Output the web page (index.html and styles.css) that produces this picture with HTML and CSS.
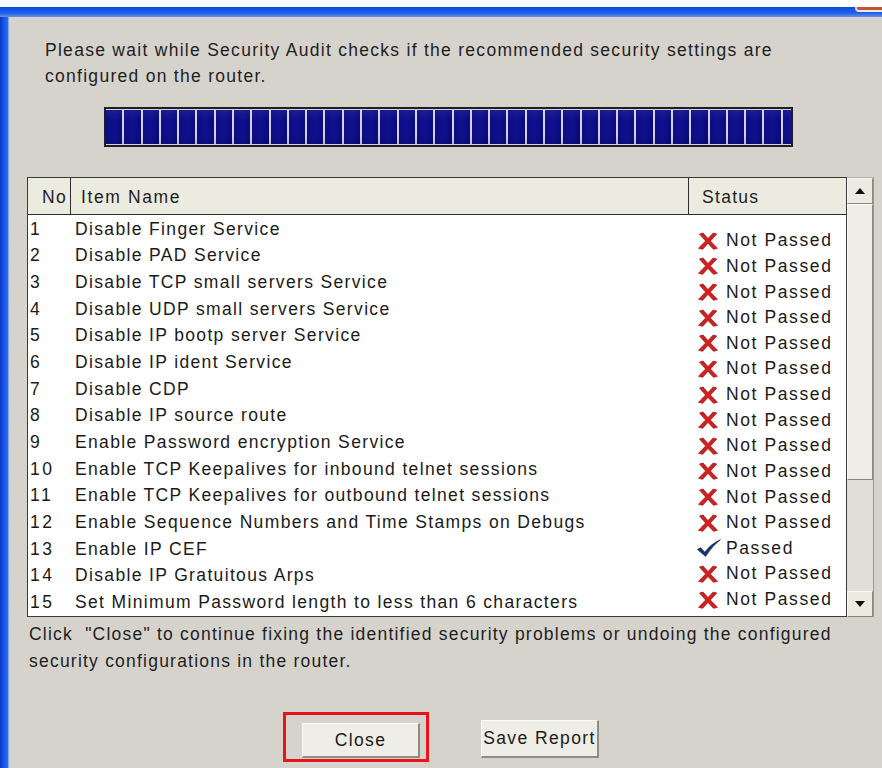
FILE: index.html
```html
<!DOCTYPE html>
<html lang="en">
<head>
<meta charset="utf-8">
<title>Security Audit</title>
<link rel="stylesheet" href="styles.css">
</head>
<body>
<svg class="defs" width="0" height="0" aria-hidden="true">
  <defs>
    <symbol id="icon-fail" viewBox="0 0 22 18">
      <path d="M2.5 2 L6 1 L11 6.6 L16.2 1 L19.8 2 L13.4 9 L20.5 16.3 L16.5 17.3 L11 11.4 L5.6 17.3 L1.5 16.3 L8.6 9 Z" fill="#d41f1f" stroke="#8e1414" stroke-width="0.7" stroke-linejoin="round"/>
    </symbol>
    <symbol id="icon-pass" viewBox="0 0 24 18">
      <path d="M0.5 10.5 L3.5 8.6 L7.8 13.2 Q13.5 5.2 23.5 0.6 Q15.2 7 8.6 17.4 Z" fill="#1b2f7a" stroke="#0e1a4e" stroke-width="0.6" stroke-linejoin="round"/>
    </symbol>
  </defs>
</svg>

<div class="window">
  <div class="titlebar"><span class="close-btn"></span></div>
  <div class="frame">
    <div class="edge"></div>
    <main class="content">
      <p class="intro">Please wait while Security Audit checks if the recommended security settings are<br>configured on the router.</p>

      <div class="progress"></div>

      <div class="listbox">
        <div class="table">
          <div class="thead">
            <div class="th th-no">No</div>
            <div class="th th-name">Item Name</div>
            <div class="th th-status">Status</div>
          </div>
          <div class="tbody">
            <ol class="items">
              <li><span class="no">1</span><span class="name">Disable Finger Service</span></li>
              <li><span class="no">2</span><span class="name">Disable PAD Service</span></li>
              <li><span class="no">3</span><span class="name">Disable TCP small servers Service</span></li>
              <li><span class="no">4</span><span class="name">Disable UDP small servers Service</span></li>
              <li><span class="no">5</span><span class="name">Disable IP bootp server Service</span></li>
              <li><span class="no">6</span><span class="name">Disable IP ident Service</span></li>
              <li><span class="no">7</span><span class="name">Disable CDP</span></li>
              <li><span class="no">8</span><span class="name">Disable IP source route</span></li>
              <li><span class="no">9</span><span class="name">Enable Password encryption Service</span></li>
              <li><span class="no">10</span><span class="name">Enable TCP Keepalives for inbound telnet sessions</span></li>
              <li><span class="no">11</span><span class="name">Enable TCP Keepalives for outbound telnet sessions</span></li>
              <li><span class="no">12</span><span class="name">Enable Sequence Numbers and Time Stamps on Debugs</span></li>
              <li><span class="no">13</span><span class="name">Enable IP CEF</span></li>
              <li><span class="no">14</span><span class="name">Disable IP Gratuitous Arps</span></li>
              <li><span class="no">15</span><span class="name">Set Minimum Password length to less than 6 characters</span></li>
            </ol>
            <ul class="status">
              <li><svg class="ico"><use href="#icon-fail"/></svg>Not Passed</li>
              <li><svg class="ico"><use href="#icon-fail"/></svg>Not Passed</li>
              <li><svg class="ico"><use href="#icon-fail"/></svg>Not Passed</li>
              <li><svg class="ico"><use href="#icon-fail"/></svg>Not Passed</li>
              <li><svg class="ico"><use href="#icon-fail"/></svg>Not Passed</li>
              <li><svg class="ico"><use href="#icon-fail"/></svg>Not Passed</li>
              <li><svg class="ico"><use href="#icon-fail"/></svg>Not Passed</li>
              <li><svg class="ico"><use href="#icon-fail"/></svg>Not Passed</li>
              <li><svg class="ico"><use href="#icon-fail"/></svg>Not Passed</li>
              <li><svg class="ico"><use href="#icon-fail"/></svg>Not Passed</li>
              <li><svg class="ico"><use href="#icon-fail"/></svg>Not Passed</li>
              <li><svg class="ico"><use href="#icon-fail"/></svg>Not Passed</li>
              <li><svg class="ico ico-pass"><use href="#icon-pass"/></svg>Passed</li>
              <li><svg class="ico"><use href="#icon-fail"/></svg>Not Passed</li>
              <li><svg class="ico"><use href="#icon-fail"/></svg>Not Passed</li>
            </ul>
          </div>
        </div>
        <div class="scrollbar">
          <div class="sb-btn"><span class="arrow-up"></span></div>
          <div class="sb-thumb"></div>
          <div class="sb-track"></div>
          <div class="sb-btn"><span class="arrow-down"></span></div>
        </div>
      </div>

      <p class="note">Click &nbsp;"Close" to continue fixing the identified security problems or undoing the configured<br>security configurations in the router.</p>

      <div class="actions">
        <div class="highlight"><button class="btn btn-close" type="button">Close</button></div>
        <button class="btn btn-save" type="button">Save Report</button>
      </div>
    </main>
  </div>
</div>
</body>
</html>
```

FILE: styles.css
```css
* { box-sizing: border-box; }

html, body {
  margin: 0;
  padding: 0;
  background: #ffffff;
  height: 768px;
  overflow: hidden;
}

.defs { position: absolute; width: 0; height: 0; }

.window {
  margin-top: 7px;
  height: 761px;
  display: flex;
  flex-direction: column;
  font-family: "Liberation Sans", Arial, sans-serif;
  font-size: 17.5px;
  letter-spacing: 1.3px;
  color: #1e1e1e;
}

/* bottom edge of the XP-style title bar */
.titlebar {
  position: relative;
  height: 10px;
  background: linear-gradient(180deg, #0a4be0 0%, #1d60ee 60%, #6f8fe0 100%);
  flex: none;
}

.close-btn {
  position: absolute;
  right: 0;
  top: 0;
  width: 27px;
  height: 5px;
  background: #b8563a;
  border-bottom: 2px solid #f2e4e0;
  border-left: 2px solid #e8d8d6;
  border-bottom-left-radius: 4px;
}

.frame {
  flex: 1;
  display: flex;
}

.edge {
  width: 10px;
  flex: none;
  background: linear-gradient(90deg, #0838c8 0%, #1656e8 40%, #2a6af0 75%, #b7c3e6 90%, #d8d6d8 100%);
}

.content {
  flex: 1;
  background: #d6d3cd;
  padding-top: 20px;
}

.intro {
  margin: 0 0 0 35px;
  line-height: 26px;
  letter-spacing: 1.28px;
}

/* segmented progress indicator */
.progress {
  margin: 18px 0 0 94px;
  width: 689px;
  height: 40px;
  border: 2px solid #1c1c2a;
  padding: 1px 0 1px 0;
  background-color: #eeeeff;
  background-image:
    linear-gradient(180deg, rgba(255,255,255,0.06) 0%, rgba(0,0,0,0) 30%, rgba(0,0,0,0) 70%, rgba(0,0,0,0.12) 100%),
    repeating-linear-gradient(90deg, #0c0c86 0px, #10108e 8px, #0a0a7e 16.3px, #d2d2f0 16.3px, #d2d2f0 18.29px);
  background-clip: content-box;
  background-origin: content-box;
}

/* list with scrollbar */
.listbox {
  margin: 30px 0 0 17px;
  width: 847px;
  height: 440px;
  display: flex;
}

.table {
  width: 820px;
  height: 440px;
  border: 1px solid #3a3a3a;
  background: #ffffff;
  display: flex;
  flex-direction: column;
}

.thead {
  height: 37px;
  display: flex;
  background: #ecebe0;
  border-bottom: 1px solid #2e2e2e;
  flex: none;
}

.th {
  display: flex;
  align-items: center;
  padding-top: 3px;
  white-space: nowrap;
}

.th-no {
  width: 43px;
  justify-content: flex-end;
  padding-right: 3px;
  border-right: 1px solid #2e2e2e;
}

.th-name {
  flex: 1;
  padding-left: 10px;
  letter-spacing: 1.6px;
  border-right: 1px solid #2e2e2e;
}

.th-status {
  width: 157px;
  padding-left: 13px;
}

.tbody {
  flex: 1;
  display: flex;
  overflow: hidden;
}

.items, .status {
  list-style: none;
  margin: 0;
  padding: 0;
}

.items {
  width: 661px;
  padding-top: 1px;
}

.items li {
  height: 26.65px;
  display: flex;
  align-items: center;
  white-space: nowrap;
  color: #1a1a1a;
}

.no {
  width: 43px;
  padding-left: 2px;
  letter-spacing: 2.6px;
}

.name {
  padding-left: 4px;
  letter-spacing: 1.35px;
}

.status {
  flex: 1;
  padding-top: 13px;
}

.status li {
  height: 25.64px;
  display: flex;
  align-items: center;
  white-space: nowrap;
  padding-left: 8px;
  letter-spacing: 1.6px;
  color: #1a1a1a;
}

.ico {
  width: 22px;
  height: 18px;
  margin-right: 7px;
  flex: none;
}

.ico-pass {
  width: 24px;
  margin-right: 5px;
}

.scrollbar {
  width: 27px;
  height: 440px;
  display: flex;
  flex-direction: column;
  border-right: 1px solid #9a9890;
  border-top: 1px solid #b0aea6;
}

.sb-btn {
  height: 26px;
  flex: none;
  background: #ecebe2;
  border: 1px solid #f8f8f4;
  border-right-color: #8a887e;
  border-bottom-color: #8a887e;
  display: flex;
  align-items: center;
  justify-content: center;
}

.arrow-up, .arrow-down {
  width: 0;
  height: 0;
  border-left: 5px solid transparent;
  border-right: 5px solid transparent;
}

.arrow-up { border-bottom: 6px solid #111; }
.arrow-down { border-top: 6px solid #111; }

.sb-thumb {
  height: 276px;
  flex: none;
  background: #efeee6;
  border: 1px solid #fafaf6;
  border-right-color: #8a887e;
  border-bottom-color: #8a887e;
}

.sb-track {
  flex: 1;
  background: #e0ded6;
}

.note {
  margin: 4px 0 0 19px;
  line-height: 27px;
  letter-spacing: 1.22px;
  white-space: nowrap;
}

.actions {
  margin: 37px 0 0 273px;
  display: flex;
  align-items: flex-end;
}

.highlight {
  border: 3px solid #e8141a;
  padding: 8px 6px 1px 16px;
  width: 146px;
  height: 50px;
}

.btn {
  font-family: "Liberation Sans", Arial, sans-serif;
  font-size: 17.5px;
  color: #1a1a1a;
  background: #eeede6;
  border: 1px solid #fbfbf8;
  border-right: 2px solid #8e8c84;
  border-bottom: 2px solid #8e8c84;
  padding: 0;
  letter-spacing: 1.4px;
}

.btn-close {
  width: 118px;
  height: 35px;
}

.btn-save {
  margin-left: 52px;
  margin-bottom: 4px;
  width: 118px;
  height: 38px;
}
```
